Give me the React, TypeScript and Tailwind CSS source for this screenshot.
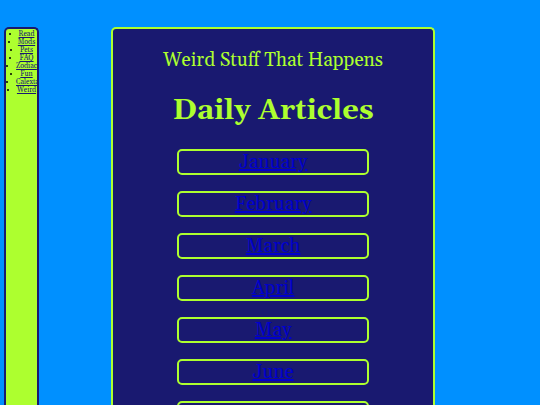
const LINKS = ["Read", "Mods", "Pets", "FAQ", "Zodiac", "Fun", "Calexta", "Weird"];

const MONTHS = ["January", "February", "March", "April", "May", "June", "July"];

export default function App() {
  return (
    <div className="flex min-h-screen bg-[#0090ff] px-1 pt-[27px] text-center font-[Gelasio,Georgia,'Liberation_Serif',serif]">
      {/* Side menu */}
      <nav className="w-[35px] shrink-0 rounded-t-[5px] border-2 border-b-0 border-[#191970] bg-[#adff2f]">
        <ul className="list-inside list-disc whitespace-nowrap pt-px text-[7px] leading-[8px] text-black">
          {LINKS.map((link) => (
            <li key={link}>
              <a href="#" className="text-[#191970] underline">{link}</a>
            </li>
          ))}
        </ul>
      </nav>

      {/* Article list */}
      <main className="ml-[13.5%] w-[61%] rounded-t-[5px] border-2 border-b-0 border-[#adff2f] bg-[#191970] pt-5 text-[#adff2f]">
        <p className="text-[19px] leading-[22px]">Weird Stuff That Happens</p>
        <h1 className="mt-5 text-[29px] leading-[40px] font-bold">Daily Articles</h1>
        <ul className="mx-auto mt-[18px] flex w-3/5 flex-col gap-4 pb-4">
          {MONTHS.map((month) => (
            <li key={month} className="rounded-[5px] border-2 border-[#adff2f] pt-px text-[19px] leading-[21px]">
              <a href="#" className="text-[#0000cd] underline decoration-2">{month}</a>
            </li>
          ))}
        </ul>
      </main>
    </div>
  );
}
